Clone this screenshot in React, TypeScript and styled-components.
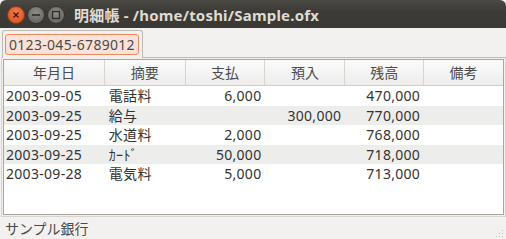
import React from "react";
import styled, { createGlobalStyle } from "styled-components";

const GlobalStyle = createGlobalStyle`
  html, body {
    margin: 0;
    padding: 0;
    background: #ffffff;
  }
  body {
    font-family: "Noto Sans", "Noto Sans CJK JP", sans-serif;
  }
`;

type Row = {
  date: string;
  memo: string;
  pay: string;
  deposit: string;
  balance: string;
  note: string;
};

const rows: Row[] = [
  { date: "2003-09-05", memo: "電話料", pay: "6,000", deposit: "", balance: "470,000", note: "" },
  { date: "2003-09-25", memo: "給与", pay: "", deposit: "300,000", balance: "770,000", note: "" },
  { date: "2003-09-25", memo: "水道料", pay: "2,000", deposit: "", balance: "768,000", note: "" },
  { date: "2003-09-25", memo: "ｶｰﾄﾞ", pay: "50,000", deposit: "", balance: "718,000", note: "" },
  { date: "2003-09-28", memo: "電気料", pay: "5,000", deposit: "", balance: "713,000", note: "" },
];

const columns = [
  { title: "年月日", width: 101 },
  { title: "摘要", width: 81 },
  { title: "支払", width: 80 },
  { title: "預入", width: 80 },
  { title: "残高", width: 79 },
  { title: "備考", width: 79 },
];

export default function App() {
  return (
    <>
      <GlobalStyle />
      <Window>
        <TitleBar>
          <Controls>
            <WinButton $kind="close">
              <svg width="8" height="8" viewBox="0 0 8 8">
                <path d="M1.5 1.5 L6.5 6.5 M6.5 1.5 L1.5 6.5" stroke="#3a1a10" strokeWidth="1.4" />
              </svg>
            </WinButton>
            <WinButton $kind="min">
              <svg width="10" height="8" viewBox="0 0 10 8">
                <path d="M1 4 H9" stroke="#2e2d2a" strokeWidth="1.6" />
              </svg>
            </WinButton>
            <WinButton $kind="max">
              <svg width="10" height="10" viewBox="0 0 10 10">
                <rect x="1.5" y="1.5" width="7" height="7" fill="none" stroke="#2e2d2a" strokeWidth="1.3" />
              </svg>
            </WinButton>
          </Controls>
          <Title>明細帳 - /home/toshi/Sample.ofx</Title>
        </TitleBar>
        <Body>
          <TabRow>
            <Tab>
              <TabLabel>0123-045-6789012</TabLabel>
            </Tab>
          </TabRow>
          <Panel>
            <Table>
              <HeaderRow>
                {columns.map((c) => (
                  <HeaderCell key={c.title} style={{ width: c.width }}>
                    {c.title}
                  </HeaderCell>
                ))}
              </HeaderRow>
              {rows.map((r, i) => (
                <DataRow key={i} $striped={i % 2 === 1}>
                  <Cell $w={101}>{r.date}</Cell>
                  <Cell $w={81} $pad={4}>{r.memo}</Cell>
                  <Cell $w={80} $right>{r.pay}</Cell>
                  <Cell $w={80} $right>{r.deposit}</Cell>
                  <Cell $w={79} $right>{r.balance}</Cell>
                  <Cell $w={79}>{r.note}</Cell>
                </DataRow>
              ))}
            </Table>
          </Panel>
          <StatusBar>
            <span>サンプル銀行</span>
            <Grip>
              <svg width="12" height="12" viewBox="0 0 12 12">
                {[
                  [10, 4],
                  [7, 7],
                  [10, 7],
                  [4, 10],
                  [7, 10],
                  [10, 10],
                ].map(([x, y], k) => (
                  <rect key={k} x={x} y={y} width="1" height="1" fill="#c4c1bc" />
                ))}
              </svg>
            </Grip>
          </StatusBar>
        </Body>
      </Window>
    </>
  );
}

const Window = styled.div`
  width: 506px;
  height: 239px;
  display: flex;
  flex-direction: column;
  background: #f2f1f0;
  overflow: hidden;
`;

const TitleBar = styled.div`
  height: 28px;
  flex: none;
  display: flex;
  align-items: center;
  background: linear-gradient(#4a4944, #3c3b37 40%, #3a3935);
  border-radius: 6px 6px 0 0;
  padding-left: 7px;
  box-sizing: border-box;
`;

const Controls = styled.div`
  display: flex;
  align-items: center;
  gap: 2px;
  margin-top: 1px;
`;

const WinButton = styled.div<{ $kind: "close" | "min" | "max" }>`
  width: 18px;
  height: 18px;
  border-radius: 50%;
  display: flex;
  align-items: center;
  justify-content: center;
  box-sizing: border-box;
  border: 1px solid ${(p) => (p.$kind === "close" ? "#8a3a1e" : "#35342f")};
  background: ${(p) =>
    p.$kind === "close"
      ? "radial-gradient(circle at 50% 35%, #f47b4e, #e05a26 70%)"
      : "radial-gradient(circle at 50% 35%, #8f8d87, #6c6a64 70%)"};
`;

const Title = styled.div`
  margin-left: 9px;
  color: #dfdbd2;
  font-weight: bold;
  font-size: 15px;
  font-family: "Noto Sans", "Noto Sans CJK JP", sans-serif;
  letter-spacing: 0.2px;
`;

const Body = styled.div`
  flex: 1;
  display: flex;
  flex-direction: column;
`;

const TabRow = styled.div`
  height: 29px;
  padding: 1px 0 0 2px;
  box-sizing: border-box;
  display: flex;
  align-items: flex-end;
`;

const Tab = styled.div`
  width: 141px;
  height: 28px;
  box-sizing: border-box;
  border: 1px solid #bebbb6;
  border-bottom: none;
  border-radius: 3px 3px 0 0;
  background: #f2f1f0;
  padding: 3px 0 0 2px;
  position: relative;
  top: 1px;
`;

const TabLabel = styled.div`
  width: 134px;
  height: 21px;
  box-sizing: border-box;
  border: 1px solid #f0895e;
  border-radius: 3px;
  background: #fbe2d8;
  color: #4a4a4a;
  font-size: 14px;
  letter-spacing: 0.3px;
  line-height: 19px;
  padding-left: 3px;
  font-family: "Noto Sans", sans-serif;
`;

const Panel = styled.div`
  height: 160px;
  box-sizing: border-box;
  border-top: 1px solid #bebbb6;
  border-left: 1px solid #d8d5d0;
  border-right: 1px solid #d8d5d0;
  border-bottom: 1px solid #d8d5d0;
  margin: 0 0 0 1px;
  padding: 1px;
`;

const Table = styled.div`
  height: 100%;
  box-sizing: border-box;
  border: 1px solid #a9a6a1;
  background: #ffffff;
  overflow: hidden;
`;

const HeaderRow = styled.div`
  display: flex;
  height: 25px;
  background: linear-gradient(#fbfbfb, #eeedec);
  border-bottom: 1px solid #cfcdca;
`;

const HeaderCell = styled.div`
  box-sizing: border-box;
  border-right: 1px solid #d6d4d1;
  text-align: center;
  font-size: 14px;
  line-height: 24px;
  color: #4c4c4c;
  font-family: "Noto Sans CJK JP", sans-serif;
  &:last-child {
    border-right: none;
  }
`;

const DataRow = styled.div<{ $striped: boolean }>`
  display: flex;
  height: 19.5px;
  background: ${(p) => (p.$striped ? "#ededec" : "#ffffff")};
`;

const Cell = styled.div<{ $w: number; $right?: boolean; $pad?: number }>`
  width: ${(p) => p.$w}px;
  box-sizing: border-box;
  padding: 0 ${(p) => (p.$right ? 4 : 0)}px 0 ${(p) => p.$pad ?? 2}px;
  text-align: ${(p) => (p.$right ? "right" : "left")};
  font-size: 14px;
  letter-spacing: 0.3px;
  line-height: 19.5px;
  color: #333333;
  font-family: "Noto Sans", "Noto Sans CJK JP", sans-serif;
  white-space: nowrap;
`;

const StatusBar = styled.div`
  flex: 1;
  display: flex;
  align-items: center;
  justify-content: space-between;
  padding-left: 5px;
  font-size: 14px;
  color: #4a4a4a;
  font-family: "Noto Sans CJK JP", sans-serif;
`;

const Grip = styled.div`
  align-self: flex-end;
  display: flex;
  padding: 0 2px 1px 0;
`;
